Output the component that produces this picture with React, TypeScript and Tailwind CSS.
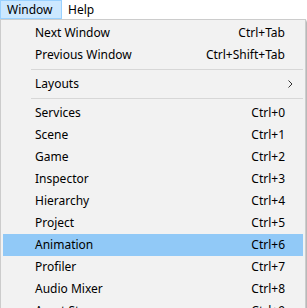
import React from "react";

type Item =
  | { kind: "item"; label: string; shortcut?: string; sub?: boolean; active?: boolean }
  | { kind: "sep" };

const items: Item[] = [
  { kind: "item", label: "Next Window", shortcut: "Ctrl+Tab" },
  { kind: "item", label: "Previous Window", shortcut: "Ctrl+Shift+Tab" },
  { kind: "sep" },
  { kind: "item", label: "Layouts", sub: true },
  { kind: "sep" },
  { kind: "item", label: "Services", shortcut: "Ctrl+0" },
  { kind: "item", label: "Scene", shortcut: "Ctrl+1" },
  { kind: "item", label: "Game", shortcut: "Ctrl+2" },
  { kind: "item", label: "Inspector", shortcut: "Ctrl+3" },
  { kind: "item", label: "Hierarchy", shortcut: "Ctrl+4" },
  { kind: "item", label: "Project", shortcut: "Ctrl+5" },
  { kind: "item", label: "Animation", shortcut: "Ctrl+6", active: true },
  { kind: "item", label: "Profiler", shortcut: "Ctrl+7" },
  { kind: "item", label: "Audio Mixer", shortcut: "Ctrl+8" },
  { kind: "item", label: "Asset Store", shortcut: "Ctrl+9" },
  { kind: "item", label: "Version Control", shortcut: "" },
];

export default function App() {
  return (
    <div
      className="w-[307px] h-[308px] overflow-hidden bg-white text-[12px] text-black"
      style={{ fontFamily: '"Noto Sans", "Liberation Sans", sans-serif' }}
    >
      <div className="flex h-[19px] items-start bg-white">
        <div className="h-[19px] w-[62px] border border-[#99d1ff] bg-[#cce8ff] pl-[6px] leading-[17px]">
          Window
        </div>
        <div className="pl-[6px] leading-[19px]">Help</div>
      </div>
      <div className="w-[306px] border border-[#cccccc] bg-[#f2f2f2] px-[2px] pt-[2px] shadow-[2px_2px_2px_rgba(0,0,0,0.3)]">
        {items.map((it, i) =>
          it.kind === "sep" ? (
            <div key={i} className="flex h-[7px] items-center pl-[28px]">
              <div className="h-px flex-1 bg-[#d7d7d7]" />
            </div>
          ) : (
            <div
              key={i}
              className={`flex h-[22px] items-center pl-[32px] pr-[18px] ${
                it.active ? "bg-[#91c9f7]" : ""
              }`}
            >
              <span className="flex-1 whitespace-nowrap">{it.label}</span>
              {it.shortcut && <span className="whitespace-nowrap">{it.shortcut}</span>}
              {it.sub && (
                <svg width="5" height="8" viewBox="0 0 5 8" className="mr-[-8px]">
                  <path d="M0.5 0.5 L4 4 L0.5 7.5" fill="none" stroke="#333" strokeWidth="1" />
                </svg>
              )}
            </div>
          )
        )}
      </div>
    </div>
  );
}
